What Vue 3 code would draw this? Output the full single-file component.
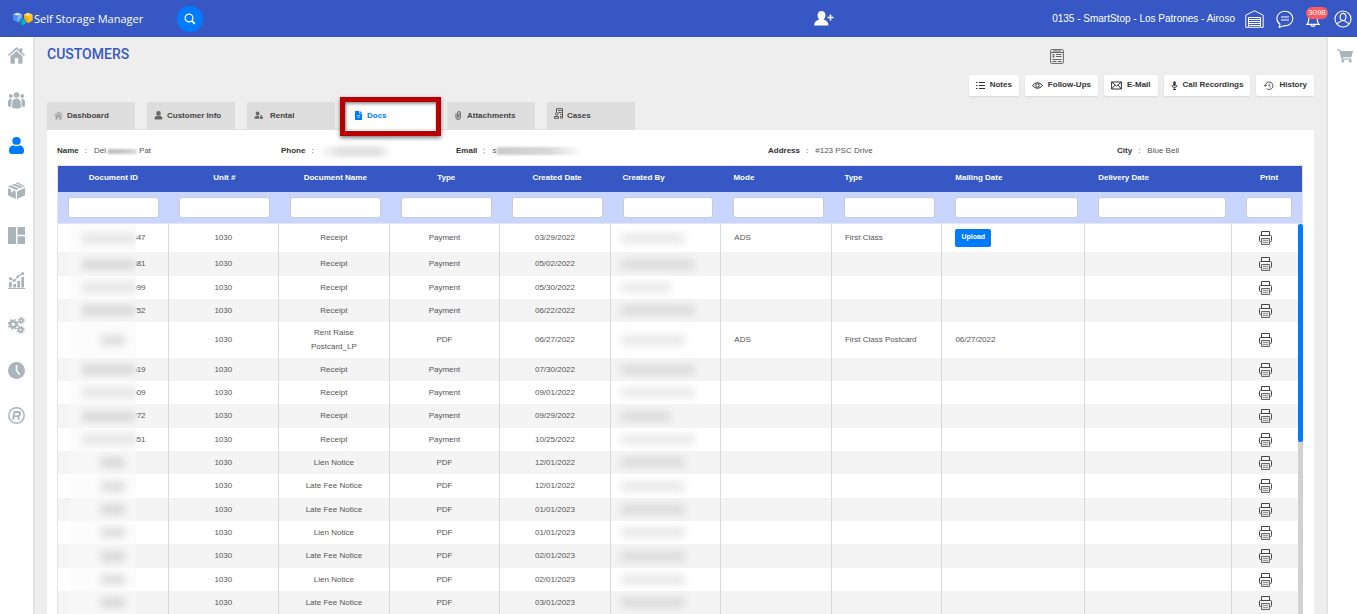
<script setup>
const tabs = [
  { name: 'Dashboard', icon: 'home' },
  { name: 'Customer Info', icon: 'person' },
  { name: 'Rental', icon: 'rental' },
  { name: 'Docs', icon: 'doc', active: true },
  { name: 'Attachments', icon: 'clip' },
  { name: 'Cases', icon: 'cases' },
]
const columns = [
  { name: 'Document ID', align: 'center' },
  { name: 'Unit #', align: 'center' },
  { name: 'Document Name', align: 'center' },
  { name: 'Type', align: 'center' },
  { name: 'Created Date', align: 'center' },
  { name: 'Created By', align: 'left' },
  { name: 'Mode', align: 'left' },
  { name: 'Type', align: 'left' },
  { name: 'Mailing Date', align: 'left' },
  { name: 'Delivery Date', align: 'left' },
  { name: 'Print', align: 'center' },
]
const row = (id, doc, type, date, smudge, extra = {}) => ({ id, doc, type, date, smudge, ...extra })
const rows = [
  row('847', 'Receipt', 'Payment', '03/29/2022', 'mid', { mode: 'ADS', mail: 'First Class', upload: true }),
  row('381', 'Receipt', 'Payment', '05/02/2022', 'long'),
  row('699', 'Receipt', 'Payment', '05/30/2022', 'short'),
  row('752', 'Receipt', 'Payment', '06/22/2022', 'long'),
  row('', 'Rent Raise Postcard_LP', 'PDF', '06/27/2022', 'mid', { mode: 'ADS', mail: 'First Class Postcard', mailed: '06/27/2022' }),
  row('519', 'Receipt', 'Payment', '07/30/2022', 'long'),
  row('509', 'Receipt', 'Payment', '09/01/2022', 'long'),
  row('272', 'Receipt', 'Payment', '09/29/2022', 'short'),
  row('351', 'Receipt', 'Payment', '10/25/2022', 'long'),
  row('', 'Lien Notice', 'PDF', '12/01/2022', 'mid'),
  row('', 'Late Fee Notice', 'PDF', '12/01/2022', 'mid'),
  row('', 'Late Fee Notice', 'PDF', '01/01/2023', 'mid'),
  row('', 'Lien Notice', 'PDF', '01/01/2023', 'mid'),
  row('', 'Late Fee Notice', 'PDF', '02/01/2023', 'mid'),
  row('', 'Lien Notice', 'PDF', '02/01/2023', 'mid'),
  row('', 'Late Fee Notice', 'PDF', '03/01/2023', 'mid'),
]
</script>

<template>
  <div class="app">
    <header class="topbar">
      <a href="#" class="brand">
        <svg class="logo" viewBox="0 0 20 14" aria-hidden="true">
          <path d="M0 2.200L4.500.8 9 2.200v6L4.500 10 0 8.200z" fill="#4d8fe8" />
          <path d="M0 2.200L4.500.8 9 2.200 4.500 3.500z" fill="#d5e4fa" />
          <path d="M4.500 3.500L9 2.200v6L4.500 10z" fill="#7fb0f0" />
          <path d="M11 2.700l4-1.900 4.500 1.900v5.800L15 11l-4-2.500z" fill="#ffa800" />
          <path d="M11 2.700l4-1.900 4.500 1.900L15 4.500z" fill="#ffe07a" />
          <path d="M15 4.500l4.500-1.800v5.800L15 11z" fill="#ffc21a" />
          <path d="M6.500 7.200L9.500 6l3 1.200v4.300l-3 1.800-3-1.800z" fill="#0f8fbf" />
          <path d="M9.500 8.500l3-1.300v4.300l-3 1.800z" fill="#18b3cf" />
        </svg>
        <span>Self Storage Manager</span>
      </a>
      <button class="search" aria-label="Search">
        <svg viewBox="0 0 12 12"><circle cx="5" cy="5" r="3.900" fill="none" stroke="#fff" stroke-width="1.200" /><path d="M7.600 7.600l3.200 3.200" stroke="#fff" stroke-width="1.900" /></svg>
      </button>
      <span class="space-wide"></span>
      <button class="bare add-user" aria-label="Add customer">
        <svg viewBox="0 0 20 15"><path d="M7.500 0c2.500 0 3.900 1.800 3.900 4.300 0 1.900-.8 3.400-1.900 4.300 2.500.8 4.800 2 4.900 5.900H.2c.1-3.900 2.600-5.100 5.200-5.900C4.300 7.700 3.600 6.200 3.600 4.300 3.600 1.800 5 0 7.500 0z" fill="#fff" /><path d="M16.500 3.500v6M13.500 6.500h6" stroke="#fff" stroke-width="1.500" /></svg>
      </button>
      <span class="space-narrow"></span>
      <div class="site">
        <span>0135 - SmartStop - Los Patrones - Airoso</span>
        <button class="bare" aria-label="Facility">
          <svg class="i-garage" viewBox="0 0 19 18" fill="none" stroke="#fff"><path d="M.8 17.300V5.200L9.500.8l8.700 4.400v12.100h-2.700V7.500h-12v9.800z" /><path d="M4 9.500h11M4 11.500h11M4 13.500h11M4 15.500h11M4 17.300h11" /></svg>
        </button>
        <button class="bare" aria-label="Messages">
          <svg class="i-round" viewBox="0 0 18 18" fill="none" stroke="#fff" stroke-width="1.100"><path d="M4 14.300A7.900 7.300 0 1 1 8 15.800L3.200 17.300z" /><path d="M5 7h8M5 10h8" /></svg>
        </button>
        <button class="bare bell" aria-label="Notifications">
          <svg class="i-bell" viewBox="0 0 14 18" fill="none" stroke="#fff" stroke-width="1.200"><path d="M.8 14.400C2.700 13 2.700 11.500 2.800 8 2.900 4.500 4.500 3 7 3s4.100 1.500 4.200 5c.1 3.500.1 5 2 6.400zM5 14.800c.3 2 3.700 2 4 0" /></svg>
          <span class="badge">3098</span>
        </button>
        <button class="bare" aria-label="Account">
          <svg class="i-round" viewBox="0 0 18 18" fill="none" stroke="#fff" stroke-width="1.100"><circle cx="9" cy="9" r="8" /><ellipse cx="9" cy="7" rx="2.900" ry="3.600" /><path d="M3 14.200c.6-1.800 2.200-2.300 4.300-3M15 14.200c-.6-1.800-2.200-2.300-4.300-3" /></svg>
        </button>
      </div>
    </header>

    <div class="body">
      <nav class="rail" aria-label="Main">
        <a href="#" aria-label="Home"><svg viewBox="0 0 17 17"><path d="M8.500 0L11.800 3V1.300h2.400v4L17 8l-1 1.100-7.500-6.600L1 9.100 0 8z" /><path d="M8.500 4l6 5.300V16q0 .8-.8.800h-3.500V11H6.800v5.800H3.300q-.8 0-.8-.8V9.300z" /></svg></a>
        <a href="#" aria-label="Groups"><svg viewBox="0 0 17 17"><circle cx="8.500" cy="3" r="2.800" /><circle cx="2.800" cy="4" r="1.900" /><circle cx="14.200" cy="4" r="1.900" /><path d="M8.500 6.500c2.700 0 4.300 1.600 4.300 4.600v4.600q-4.300 1.700-8.600 0v-4.600c0-3 1.600-4.600 4.300-4.600z" /><path d="M3.800 6.700C1.300 6.500 0 7.800 0 10v4.200q1.500.8 3.300.8v-4.500q0-2.200.5-3.800zM13.200 6.700C15.700 6.500 17 7.800 17 10v4.200q-1.500.8-3.300.8v-4.500q0-2.200-.5-3.800z" /></svg></a>
        <a href="#" class="on" aria-label="Customers"><svg viewBox="0 0 17 17"><ellipse cx="8.500" cy="3.900" rx="4.200" ry="3.900" /><path d="M5 8.300q3.500 1.700 7 0c2.800.7 4 2.800 4 5.500q0 3.200-2.500 3.200h-10Q1 17 1 13.800c0-2.700 1.200-4.800 4-5.500z" /></svg></a>
        <a href="#" aria-label="Units"><svg viewBox="0 0 17 17"><path d="M0 4.600L2.800 3.300 11 6.800 8.300 8zM4 2.800L6.300 1.700 15 5l-2.600 1.200zM7.500 1.200L9.600.2 17 4.300l-1 .4zM0 6l3.200 1.400v2.300L5 10.500V8.200l2.800 1.300V17L0 13.300zM9 9.500l8-3.700v7.500L9 17z" /></svg></a>
        <a href="#" aria-label="Layout"><svg viewBox="0 0 17 17"><path d="M0 0h8v17H0zM9.500 0H17v7.700H9.500zM9.500 9.200H17V17H9.500z" /></svg></a>
        <a href="#" aria-label="Reports"><svg viewBox="0 0 17 17"><path d="M0 16h17v1H0zM1 10h2.800v5.500H1zM5.200 12H8v3.500H5.200zM9.300 9h2.800v6.500H9.300zM13.300 5H16v10.500h-2.700z" /><path d="M2.500 6.500L6 9l4-4.500 4.500-3" fill="none" stroke="#a9b5ba" stroke-width="1.100" /><circle cx="2.500" cy="6.500" r="1.500" /><circle cx="6.300" cy="8.700" r="1.400" /><circle cx="10" cy="4.700" r="1.400" /><circle cx="14.800" cy="1.500" r="1.500" /></svg></a>
        <a href="#" aria-label="Settings"><svg viewBox="0 0 17 17" stroke="#a9b5ba"><circle cx="5.200" cy="7.300" r="3" fill="none" stroke-width="2.500" /><circle cx="5.200" cy="7.300" r="4.700" fill="none" stroke-width="1.500" stroke-dasharray="1.900 1.790" /><circle cx="13.300" cy="3.500" r="1.700" fill="none" stroke-width="1.800" /><circle cx="13.300" cy="3.500" r="2.900" fill="none" stroke-width="1.200" stroke-dasharray="1.200 1.070" /><circle cx="12.500" cy="12.800" r="2" fill="none" stroke-width="2" /><circle cx="12.500" cy="12.800" r="3.500" fill="none" stroke-width="1.300" stroke-dasharray="1.400 1.340" /></svg></a>
        <a href="#" aria-label="Time clock"><svg viewBox="0 0 17 17"><circle cx="8.500" cy="8.500" r="8.500" /><path d="M8.500 3v5.800l3.300 4" fill="none" stroke="#fff" stroke-width="1.500" /></svg></a>
        <a href="#" aria-label="Registered"><svg viewBox="0 0 17 17"><circle cx="8.500" cy="8.500" r="7.700" fill="none" stroke="#a9b5ba" stroke-width="1.500" /><path d="M5 12.600L6.500 5h3.300q2.300 0 2.300 1.900 0 1.800-1.800 2.300l.7 3.400" fill="none" stroke="#a9b5ba" stroke-width="1.900" /><path d="M6.500 9.200h3.500" stroke="#a9b5ba" stroke-width="1.600" /></svg></a>
      </nav>

      <main class="main">
        <div class="title-row">
          <h1>CUSTOMERS</h1>
          <button class="bare" aria-label="Summary">
            <svg class="i-sheet" viewBox="0 0 14 15" fill="none" stroke="#666"><rect x=".6" y=".6" width="12.800" height="13.800" rx="1" /><path d="M1 3.500h12M3 2h8" /><path d="M2.500 5.500h2M6 5.500h5.500M6 7.500h5.500M2.500 10.500h9M2.500 12.500h4M8 12.500h3.500" /><path d="M2.500 7.500h2" stroke-width="2" /></svg>
          </button>
        </div>

        <div class="tools">
          <button><svg class="t9" viewBox="0 0 9 9" stroke="#333"><path d="M0 1.500h1.500M3 1.500h6M0 4.500h1.500M3 4.500h6M0 7.500h1.500M3 7.500h6" /></svg><span>Notes</span></button>
          <button><svg class="t11" viewBox="0 0 11 9" fill="none" stroke="#333"><path d="M.5 4.500Q5.500-1.200 10.500 4.500 5.500 10.200.5 4.500z" /><circle cx="5.500" cy="4.500" r="1.700" /></svg><span>Follow-Ups</span></button>
          <button><svg class="t11" viewBox="0 0 11 9" fill="none" stroke="#333"><path d="M.6 1h9.800v7H.6zM.6 1l4.900 4 4.900-4M.6 8l3.500-4M10.400 8L6.900 4" /></svg><span>E-Mail</span></button>
          <button><svg class="t7" viewBox="0 0 7 9" fill="none" stroke="#333"><rect x="2.300" y=".3" width="2.400" height="5" rx="1.200" fill="#333" stroke="none" /><path d="M1 4q0 2.600 2.500 2.600T6 4M3.500 6.600V9M2 8.500h3" stroke-width=".9" /></svg><span>Call Recordings</span></button>
          <button><svg class="t11" viewBox="0 0 11 10" fill="none" stroke="#333" stroke-width=".9"><path d="M2 5.500A4.200 4.200 0 1 1 3.500 8.500M.3 4.300L2 6l1.700-1.700M6.200 2.800v2.600L8 7" /></svg><span>History</span></button>
        </div>

        <nav class="tabs" aria-label="Customer sections">
          <a v-for="t in tabs" :key="t.name" href="#" class="tab" :class="[t.icon, { active: t.active }]">
            <svg v-if="t.icon === 'home'" class="ic" viewBox="0 0 9 9" fill="#a2a2a2"><path d="M4.500.5L9 4.500l-.6.6L4.500 1.700.6 5.100 0 4.500zM4.500 2.500l3 2.700v3.300H5.300V6H3.700v2.500H1.500V5.200zM6.500 1h1.200v2z" /></svg>
            <svg v-else-if="t.icon === 'person'" class="ic" viewBox="0 0 9 9" fill="#666"><circle cx="4.500" cy="2.400" r="2.300" /><path d="M3 4.800q1.500.8 3 0 2.500.5 2.500 2.700 0 1-1 1h-6q-1 0-1-1Q.5 5.300 3 4.800z" /></svg>
            <svg v-else-if="t.icon === 'rental'" class="ic" viewBox="0 0 10 9" fill="#666"><circle cx="4" cy="2.200" r="2.100" /><path d="M2.500 4.700h3L5.700 8H.5q-.2-2.700 2-3.300zM6.500 5.500h3.200v3H6.500zM7 4.300h2v1H7z" /></svg>
            <svg v-else-if="t.icon === 'doc'" class="ic" viewBox="0 0 9 9"><path d="M1 0h4.200v2.500H8V9H1z" fill="#007bff" /><path d="M5.900 0L8 2H5.900z" fill="#007bff" /><path d="M3 4.500h3M3 6.200h3" stroke="#fff" stroke-width=".6" /></svg>
            <svg v-else-if="t.icon === 'clip'" class="ic" viewBox="0 0 8 9" fill="none" stroke="#555"><path d="M1.500 2.300v4.200q0 2 2.200 2t2.200-2V2q0-1.500-1.400-1.500T3.100 2v4q0 .7.700.7t.6-.7V2.500" stroke-width=".9" /></svg>
            <svg v-else class="ic-cases" viewBox="0 0 9 11" fill="none" stroke="#555"><path d="M2.500 4V.7h6v9.300H6M4 2.500h3.500M4.500 4.500h3M6 6.500h1.500M6 8.500h1.500" /><circle cx="2.800" cy="5.800" r="1.300" /><path d="M.5 8.500h4v1.800h-4z" /></svg>
            <span>{{ t.name }}</span>
            <span v-if="t.active" class="marker"></span>
          </a>
        </nav>

        <section class="panel">
          <dl class="facts">
            <div><dt>Name</dt><dd>Del <i class="smear name-smear"></i> Pat</dd></div>
            <div><dt>Phone</dt><dd class="close"><i class="smear phone-smear"></i></dd></div>
            <div><dt>Email</dt><dd class="mail">s<i class="smear mail-smear"></i></dd></div>
            <div><dt>Address</dt><dd>#123 PSC Drive</dd></div>
            <div><dt>City</dt><dd>Blue Bell</dd></div>
          </dl>

          <div class="grid-wrap">
            <table>
              <thead>
                <tr class="heads">
                  <th v-for="(c, i) in columns" :key="i" :class="c.align" scope="col">{{ c.name }}</th>
                </tr>
                <tr class="filters">
                  <td v-for="(c, i) in columns" :key="i"><input type="text" :aria-label="'Filter ' + c.name" /></td>
                </tr>
              </thead>
              <tbody>
                <tr v-for="(r, i) in rows" :key="i" :class="{ first: i === 0 }">
                  <td class="center id-cell">
                    <span class="mask"><i :class="r.id ? 'blob-long' : 'blob-short'"></i></span>
                    <span class="tail">{{ r.id }}</span>
                  </td>
                  <td class="center">1030</td>
                  <td class="center doc" :class="{ wrapped: r.doc.length > 16 }">{{ r.doc }}</td>
                  <td class="center">{{ r.type }}</td>
                  <td class="center">{{ r.date }}</td>
                  <td class="by"><i class="blob" :class="r.smudge"></i></td>
                  <td>{{ r.mode }}</td>
                  <td>{{ r.mail }}</td>
                  <td><button v-if="r.upload" class="upload">Upload</button>{{ r.mailed }}</td>
                  <td></td>
                  <td class="center">
                    <button class="bare" aria-label="Print">
                      <svg class="i-print" viewBox="0 0 13 14" fill="none" stroke="#444"><path d="M2.500 4V.5h8V4" /><path d="M3 10.500H1.500q-1 0-1-1v-4q0-1 1-1h10q1 0 1 1v4q0 1-1 1H10" /><path d="M2.500 7.500h8v6h-8z" fill="#e2e2e2" stroke="#666" /><path d="M4 9.500h5M4 11.500h5" stroke="#999" /></svg>
                    </button>
                  </td>
                </tr>
              </tbody>
            </table>
            <div class="track"><div class="thumb"></div></div>
          </div>
        </section>
      </main>

      <aside class="cart">
        <button class="bare" aria-label="Cart">
          <svg class="i-cart" viewBox="0 0 16 14"><path d="M0 .5h3.200l.6 1.500H16l-1.500 6.300H5.300l.3 1.200h9v1.200H4.500L2.300 1.700H0z" fill="#a9b5ba" /><circle cx="5.800" cy="12.200" r="1.400" fill="#a9b5ba" /><circle cx="13.200" cy="12.200" r="1.400" fill="#a9b5ba" /></svg>
        </button>
      </aside>
    </div>
  </div>
</template>

<style>
body { margin: 0; }
</style>

<style scoped>
* { box-sizing: border-box; }
svg { display: block; flex: none; }
.app {
  display: flex;
  flex-direction: column;
  height: 100vh;
  overflow: hidden;
  background: #eee;
  color: #555;
  font: 8px/14px "Liberation Sans", Arial, sans-serif;
}
button { font-family: inherit; cursor: pointer; }
a { color: inherit; text-decoration: none; }
.bare { display: block; padding: 0; border: 0; background: none; }

.topbar {
  display: flex;
  align-items: center;
  flex: none;
  height: 37px;
  padding: 0 5px 0 13px;
  background: #3758c4;
  color: #fff;
}
.brand { display: flex; align-items: center; gap: 1px; font: 11px/16px "Open Sans", "Noto Sans", sans-serif; }
.logo { width: 20px; height: 14px; }
.search {
  display: grid;
  place-items: center;
  width: 26px;
  height: 26px;
  margin-left: 34px;
  padding: 0;
  border: 0;
  border-radius: 50%;
  background: #007bff;
}
.search svg { width: 12px; height: 12px; }
.space-wide { flex: 14; }
.space-narrow { flex: 5; }
.add-user svg { width: 20px; height: 15px; }
.site { display: flex; align-items: center; gap: 12px; font-size: 10px; }
.site > span { margin-right: -2px; }
.i-garage { width: 19px; height: 18px; }
.i-round { width: 18px; height: 18px; }
.i-bell { width: 14px; height: 18px; }
.bell { position: relative; margin-right: 2px; }
.badge {
  position: absolute;
  left: 0;
  top: -3px;
  padding: 0 2px;
  border-radius: 6px;
  background: #ff5a5f;
  color: #fff;
  font-size: 8px;
  line-height: 12px;
}

.body { display: flex; flex: 1; min-height: 0; }
.rail {
  display: flex;
  flex-direction: column;
  align-items: center;
  gap: 28px;
  width: 33px;
  padding-top: 10px;
  background: #fff;
  box-shadow: 0 0 3px rgba(0, 0, 0, .15);
}
.rail svg { width: 17px; height: 17px; fill: #a9b5ba; }
.rail .on svg { fill: #007bff; }
.cart {
  width: 29px;
  padding: 12px 0 0 9px;
  background: #fff;
  box-shadow: 0 0 3px rgba(0, 0, 0, .15);
}
.i-cart { width: 16px; height: 14px; }

.main { display: flex; flex-direction: column; flex: 1; min-width: 0; padding: 0 14px; }
.title-row { display: flex; align-items: center; justify-content: space-between; height: 38px; padding-right: 250px; }
h1 { margin: 0; padding-bottom: 4px; color: #3758c4; font: 500 14px/20px Roboto, sans-serif; }
.i-sheet { width: 14px; height: 15px; }
.tools { display: flex; justify-content: flex-end; gap: 6px; }
.tools button {
  display: flex;
  align-items: center;
  gap: 5px;
  height: 21px;
  padding: 0 7px;
  border: 0;
  border-radius: 2px;
  background: #fff;
  box-shadow: 0 1px 2px rgba(0, 0, 0, .1);
  color: #333;
  font-size: 8px;
  font-weight: 700;
  line-height: 14px;
}
.tools span { padding-bottom: 2px; }
.t7 { width: 7px; height: 9px; }
.t9 { width: 9px; height: 9px; }
.t11 { width: 11px; height: 9px; }

.tabs { display: flex; align-self: flex-start; gap: 12px; margin-top: 6px; border-bottom: 1px solid #e0e0e0; }
.tab {
  position: relative;
  display: flex;
  align-items: center;
  gap: 4px;
  width: 88px;
  height: 27px;
  padding-left: 7px;
  background: #ddd;
  color: #444;
  font-weight: 700;
}
.tab.active { background: #fff; color: #007bff; }
.tab.rental { gap: 7px; }
.ic { width: 9px; height: 9px; }
.ic-cases { width: 9px; height: 11px; margin-bottom: 4px; }
.marker {
  position: absolute;
  z-index: 2;
  inset: -5px -6px -7px -7px;
  border: 5px solid #b90000;
  box-shadow: 0 2px 4px rgba(0, 0, 0, .5), inset 1px 2px 3px rgba(0, 0, 0, .4);
}

.panel { display: flex; flex-direction: column; flex: 1; min-height: 0; padding: 0 11px 0 10px; background: #fff; }
.facts { display: grid; grid-template-columns: 224fr 175fr 312fr 349fr 186fr; flex: none; margin: 0; padding: 14px 0 7px; }
.facts div { display: flex; min-width: 0; }
.facts dt { color: #333; font-weight: 700; }
.facts dt::after { content: ":"; margin: 0 7px 0 6px; font-weight: 400; }
.facts dd { display: flex; gap: 2px; margin: 0; }
.facts dd.close { margin-left: -3px; }
.facts dd.mail { gap: 0; }
.smear { align-self: center; height: 8px; filter: blur(1px); }
.name-smear { width: 29px; height: 5px; background: linear-gradient(90deg, #bbb, #c8c8c8 60%, #ddd); }
.phone-smear { width: 74px; height: 11px; filter: blur(2px); background: linear-gradient(90deg, #fff, #e2e2e2 30%, #e2e2e2 80%, #fff); }
.mail-smear { width: 86px; background: linear-gradient(90deg, #ccc, #d8d8d8 60%, #fff); }

.grid-wrap { position: relative; display: flex; flex: 1; min-height: 0; border: 1px solid #e4e4e8; border-bottom: 0; }
table { display: flex; flex: 1; flex-direction: column; min-width: 0; }
thead { display: block; flex: none; border-bottom: 1px solid #e6e6ea; }
tbody { display: block; flex: 1; min-height: 0; margin-right: 4px; overflow-y: auto; scrollbar-width: none; }
tr { display: grid; grid-template-columns: repeat(8, 111fr) 143fr 148fr 66fr; }
th, td { min-width: 0; padding: 0; text-align: left; }
.heads { height: 26px; background: #3758c4; color: #fff; }
.heads th { padding: 5px 10px; font-weight: 700; }
.heads th.center { text-align: center; }
.heads th:last-child { padding: 5px 0; }
.filters { height: 31px; background: #c8d5fe; }
.filters td { padding: 5px 10px; }
input { display: block; width: 100%; height: 21px; padding: 0 4px; border: 1px solid #ccc; border-radius: 3px; background: #fff; font: inherit; }

tbody tr { min-height: 23px; }
tbody tr:nth-child(3n + 2) { min-height: 24px; }
tbody tr.first { min-height: 28px; }
tbody tr:nth-child(even) { background: #f4f4f4; }
tbody td { display: flex; align-items: center; padding: 0 13px; border-right: 1px solid #d9d9d9; }
tbody td:last-child { border-right: 0; }
tbody td.center { justify-content: center; padding: 0; text-align: center; }
tbody td.wrapped { padding: 4px 30px; }
.id-cell { position: relative; }
.id-cell .tail { width: 100%; padding-right: 22px; text-align: right; }
.mask {
  position: absolute;
  z-index: 1;
  inset: 0 auto 0 12px;
  display: flex;
  align-items: center;
  justify-content: center;
  width: 66px;
  overflow: hidden;
  background: #fcfcfc;
}
tr:nth-child(even) .mask { background: #f7f7f7; }
.blob-long { width: 60px; height: 9px; margin-left: 12px; background: #e2e2e2; filter: blur(4px); }
.blob-short { width: 24px; height: 9px; margin-left: 20px; background: #d8d8d8; filter: blur(4px); }
tr:nth-child(even) .mask i { background: #d2d2d2; }
tbody td.by { padding: 0 10px; overflow: hidden; }
.blob { height: 9px; background: #e6e6e6; filter: blur(4px); }
tr:nth-child(even) .blob { background: #d8d8d8; }
.long { width: 74px; }
.mid { width: 64px; }
.short { width: 50px; }
.upload { height: 18px; padding: 0 6px 2px; border: 0; border-radius: 2px; background: #007bff; color: #fff; font-size: 7px; font-weight: 700; line-height: 14px; }
.i-print { width: 13px; height: 14px; }

.track { position: absolute; top: 58px; right: -1px; bottom: 0; width: 5px; background: #d1d1d1; }
.thumb { height: 56%; border-radius: 3px; background: #007bff; }
</style>
